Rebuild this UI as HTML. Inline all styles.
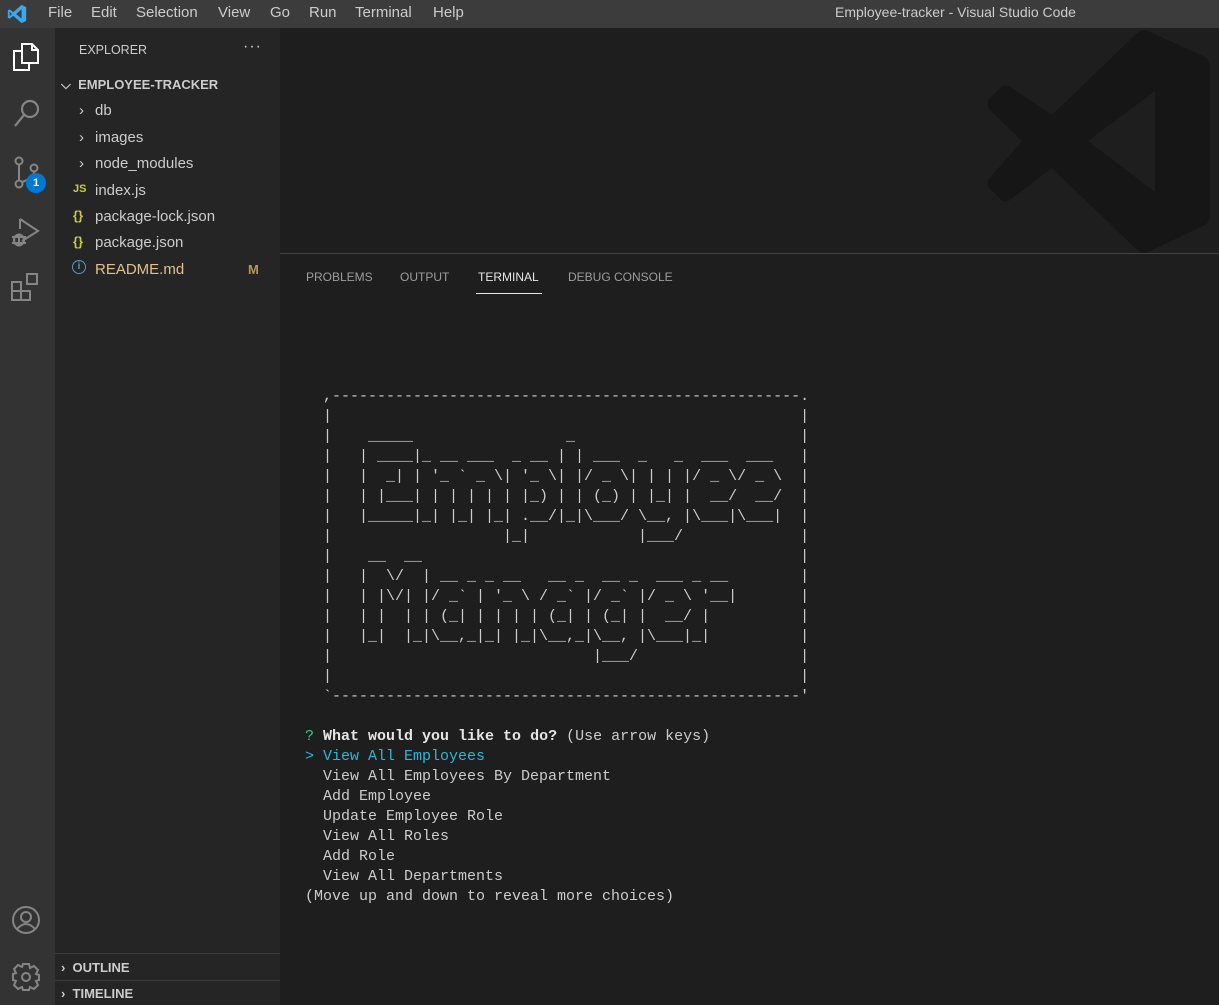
<!DOCTYPE html>
<html><head><meta charset="utf-8">
<style>
*{margin:0;padding:0;box-sizing:border-box}
body{width:1219px;height:1005px;background:#1e1e1e;overflow:hidden;position:relative;font-family:"Liberation Sans",sans-serif;color:#ccc}
#title{position:absolute;left:0;top:0;width:1219px;height:28px;background:#3c3c3c;font-size:15px;color:#ccc}
#title span{position:absolute;top:4px}
#act{position:absolute;left:0;top:28px;width:55px;height:977px;background:#333}
#side{position:absolute;left:55px;top:28px;width:225px;height:977px;background:#252526}
.row{position:absolute;font-size:15px;color:#ccc;white-space:nowrap}
.hdr{font-weight:bold;font-size:13px;color:#ccc}
#panel{position:absolute;left:280px;top:253px;width:939px;height:752px;border-top:1px solid #444}
.tab{position:absolute;top:16px;font-size:12px;color:#9d9d9d}
pre{position:absolute;left:305px;font-family:"Liberation Mono",monospace;font-size:15px;line-height:20px;color:#ccc}
</style></head><body>
<div id="title">
<svg style="position:absolute;left:6px;top:3px" width="22" height="22" viewBox="0 0 24 24"><path d="M17 2 L22 4.5 V19.5 L17 22 L8 14 L4 17 L2 16 V8 L4 7 L8 10 Z M17 7 L11 12 L17 17 Z M4 9.5 V14.5 L6.5 12 Z" fill="#3ba7f0" fill-rule="evenodd"/></svg>
<span style="left:48px">File</span><span style="left:91px">Edit</span><span style="left:136px">Selection</span><span style="left:218px">View</span><span style="left:270px">Go</span><span style="left:309px">Run</span><span style="left:355px">Terminal</span><span style="left:433px">Help</span>
<span style="left:835px;font-size:14px">Employee-tracker - Visual Studio Code</span>
</div>
<div id="act">
<svg style="position:absolute;left:12px;top:14px" width="28" height="30" viewBox="0 0 28 30" fill="none" stroke="#fff" stroke-width="2"><path d="M10 2 H20 L26 8 V21 H10 Z"/><path d="M20 2 V8 H26"/><path d="M10 9 H2 V28 H17 V21"/></svg>
<svg style="position:absolute;left:12px;top:70px" width="30" height="32" viewBox="0 0 30 32" fill="none" stroke="#858585" stroke-width="2.2"><circle cx="18" cy="11" r="8"/><path d="M12 17 L3 28"/></svg>
<svg style="position:absolute;left:12px;top:128px" width="30" height="34" viewBox="0 0 30 34" fill="none" stroke="#858585" stroke-width="2"><circle cx="7" cy="5" r="3.5"/><circle cx="7" cy="28" r="3.5"/><circle cx="22" cy="12" r="3.5"/><path d="M7 9 V24 M22 16 Q22 22 10 26"/></svg>
<div style="position:absolute;left:26px;top:145px;width:20px;height:20px;border-radius:50%;background:#0078d4;color:#fff;font-size:11px;font-weight:bold;text-align:center;line-height:20px">1</div>
<svg style="position:absolute;left:10px;top:187px" width="32" height="34" viewBox="0 0 32 34" fill="none" stroke="#858585" stroke-width="2"><path d="M10 4 L28 16 L12 26"/><path d="M10 4 V14"/><ellipse cx="9" cy="25" rx="5" ry="5.5"/><path d="M2 22 H16 M2 28 H16 M9 20 V31"/></svg>
<svg style="position:absolute;left:10px;top:244px" width="32" height="32" viewBox="0 0 32 32" fill="none" stroke="#858585" stroke-width="2"><rect x="2" y="10" width="9" height="9"/><rect x="2" y="19" width="9" height="9"/><rect x="11" y="19" width="9" height="9"/><rect x="17" y="2" width="10" height="10"/></svg>
<svg style="position:absolute;left:11px;top:877px" width="30" height="30" viewBox="0 0 30 30" fill="none" stroke="#858585" stroke-width="2"><circle cx="15" cy="15" r="13"/><circle cx="15" cy="12" r="5"/><path d="M6 24 Q15 14 24 24"/></svg>
<svg style="position:absolute;left:11px;top:934px" width="30" height="30" viewBox="0 0 30 30" fill="none" stroke="#858585" stroke-width="2"><circle cx="15" cy="15" r="4"/><path d="M12 2 H18 L19 6 L23 4 L27 8 L25 12 L28 13 V18 L25 19 L27 23 L23 27 L19 25 L18 28 H12 L11 25 L7 27 L3 23 L5 19 L2 18 V12 L5 11 L3 7 L7 3 L11 5 Z"/></svg>
</div>
<div id="side">
<div class="row" style="left:24px;top:15px;font-size:12.5px">EXPLORER</div>
<div class="row" style="left:188px;top:10px;font-size:16px;letter-spacing:1px">···</div>
<div class="row hdr" style="left:6px;top:49px">⌵ &nbsp;EMPLOYEE-TRACKER</div>
<div class="row" style="left:24px;top:74px">›</div><div class="row" style="left:40px;top:74px">db</div>
<div class="row" style="left:24px;top:101px">›</div><div class="row" style="left:40px;top:101px">images</div>
<div class="row" style="left:24px;top:127px">›</div><div class="row" style="left:40px;top:127px">node_modules</div>
<div class="row" style="left:18px;top:155px;font-size:11px;font-weight:bold;color:#cbcb41">JS</div><div class="row" style="left:40px;top:154px">index.js</div>
<div class="row" style="left:18px;top:180px;font-size:13px;font-weight:bold;color:#cbcb41">{}</div><div class="row" style="left:40px;top:180px">package-lock.json</div>
<div class="row" style="left:18px;top:206px;font-size:13px;font-weight:bold;color:#cbcb41">{}</div><div class="row" style="left:40px;top:206px">package.json</div>
<div class="row" style="left:17px;top:232px;width:14px;height:14px;border:1.5px solid #519aba;border-radius:50%;font-size:10px;color:#519aba;text-align:center;line-height:11px;font-weight:bold">i</div><div class="row" style="left:40px;top:233px;color:#e2c08d">README.md</div>
<div class="row" style="left:193px;top:234px;color:#c09553;font-weight:bold;font-size:13px">M</div>
<div style="position:absolute;left:0;top:925px;width:225px;border-top:1px solid #3c3c3c"></div>
<div class="row hdr" style="left:6px;top:932px">› &nbsp;OUTLINE</div>
<div style="position:absolute;left:0;top:952px;width:225px;border-top:1px solid #3c3c3c"></div>
<div class="row hdr" style="left:6px;top:958px">› &nbsp;TIMELINE</div>
</div>
<svg style="position:absolute;left:980px;top:28px" width="239" height="225" viewBox="980 28 239 225"><path fill="#161616" fill-rule="evenodd" d="M1148,31 L1205,57 Q1210,60 1210,70 L1210,215 Q1210,222 1205,225 L1148,252 Q1142,254 1136,249 L1052,168 L1010,200 Q1005,204 1000,199 L990,189 Q985,183 990,178 L1022,141 L990,110 Q985,103 990,98 L1000,88 Q1005,83 1012,88 L1052,115 L1136,34 Q1142,29 1148,31 Z M1155,91 L1155,192 L1088,141 Z"/></svg>
<div id="panel">
<div class="tab" style="left:26px">PROBLEMS</div>
<div class="tab" style="left:120px">OUTPUT</div>
<div class="tab" style="left:198px;color:#e7e7e7">TERMINAL</div>
<div style="position:absolute;left:196px;top:39px;width:66px;height:1px;background:#e7e7e7"></div>
<div class="tab" style="left:288px">DEBUG CONSOLE</div>
</div>
<pre style="top:387px">  ,----------------------------------------------------.
  |                                                    |
  |    _____                 _                         |
  |   | ____|_ __ ___  _ __ | | ___  _   _  ___  ___   |
  |   |  _| | '_ ` _ \| '_ \| |/ _ \| | | |/ _ \/ _ \  |
  |   | |___| | | | | | |_) | | (_) | |_| |  __/  __/  |
  |   |_____|_| |_| |_| .__/|_|\___/ \__, |\___|\___|  |
  |                   |_|            |___/             |
  |    __  __                                          |
  |   |  \/  | __ _ _ __   __ _  __ _  ___ _ __        |
  |   | |\/| |/ _` | '_ \ / _` |/ _` |/ _ \ '__|       |
  |   | |  | | (_| | | | | (_| | (_| |  __/ |          |
  |   |_|  |_|\__,_|_| |_|\__,_|\__, |\___|_|          |
  |                             |___/                  |
  |                                                    |
  `----------------------------------------------------'
</pre>
<pre style="top:727px"><span style="color:#23d18b">?</span> <b style="color:#e5e5e5">What would you like to do?</b> (Use arrow keys)
<span style="color:#29b8db">&gt; View All Employees</span>
  View All Employees By Department
  Add Employee
  Update Employee Role
  View All Roles
  Add Role
  View All Departments
(Move up and down to reveal more choices)</pre>
</body></html>
